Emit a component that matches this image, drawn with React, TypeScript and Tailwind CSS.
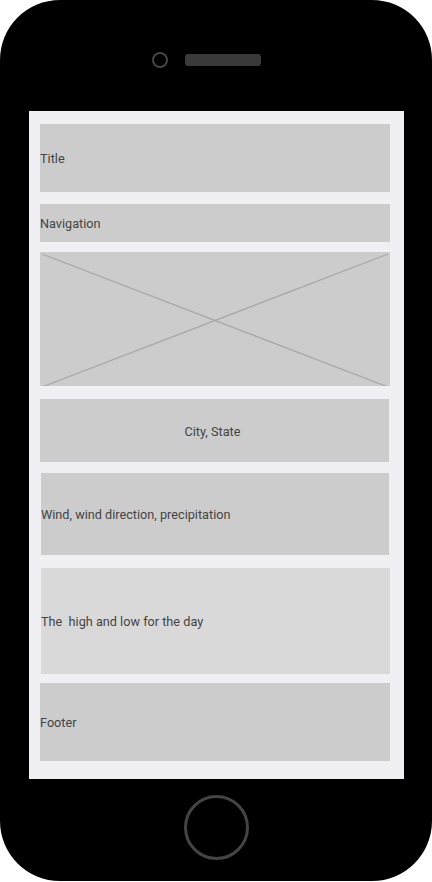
const font = { fontFamily: 'Roboto, "Liberation Sans", sans-serif' };

function Block({ className, children }: { className: string; children?: React.ReactNode }) {
  return <div className={`flex items-center pt-[2px] text-[12.7px] text-[#444444] ${className}`}>{children}</div>;
}

export default function App() {
  return (
    <div className="w-[432px] h-[882px] bg-white" style={font}>
      <div className="w-[432px] h-[881px] bg-black rounded-[60px] flex flex-col">
        {/* camera + speaker */}
        <div className="h-[111px] flex items-start pt-[52px] pl-[152px]">
          <div className="w-4 h-4 rounded-full border-2 border-[#444444]" />
          <div className="ml-[17px] mt-[2px] w-[76px] h-3 rounded-[3px] bg-[#3a3a3a]" />
        </div>

        {/* screen */}
        <div className="ml-[29px] w-[375px] h-[668px] bg-[#efeff4] flex flex-col pt-[13px] pl-[11px]">
          <Block className="w-[350px] h-[68px] bg-[#cccccc]">Title</Block>
          <Block className="mt-3 w-[350px] h-[38px] bg-[#cccccc]">Navigation</Block>
          <div className="mt-[10px] w-[350px] h-[134px] bg-[#cccccc]">
            <svg width="350" height="134" viewBox="0 0 350 134">
              <line x1="2" y1="2" x2="348" y2="135" stroke="#a8a8a8" strokeWidth="1.2" />
              <line x1="2" y1="135" x2="348" y2="2" stroke="#a8a8a8" strokeWidth="1.2" />
            </svg>
          </div>
          <Block className="mt-[13px] w-[349px] h-[63px] bg-[#cccccc] justify-center pr-1">City, State</Block>
          <Block className="mt-[11px] ml-px w-[348px] h-[82px] bg-[#cccccc]">Wind, wind direction, precipitation</Block>
          <Block className="mt-[13px] ml-px w-[349px] h-[106px] bg-[#d9d9d9] whitespace-pre">The  high and low for the day</Block>
          <Block className="mt-[9px] w-[350px] h-[78px] bg-[#cccccc]">Footer</Block>
        </div>

        {/* home button */}
        <div className="flex justify-center pt-4 pl-px">
          <div className="w-[65px] h-[65px] rounded-full border-[3px] border-[#444444]" />
        </div>
      </div>
    </div>
  );
}
